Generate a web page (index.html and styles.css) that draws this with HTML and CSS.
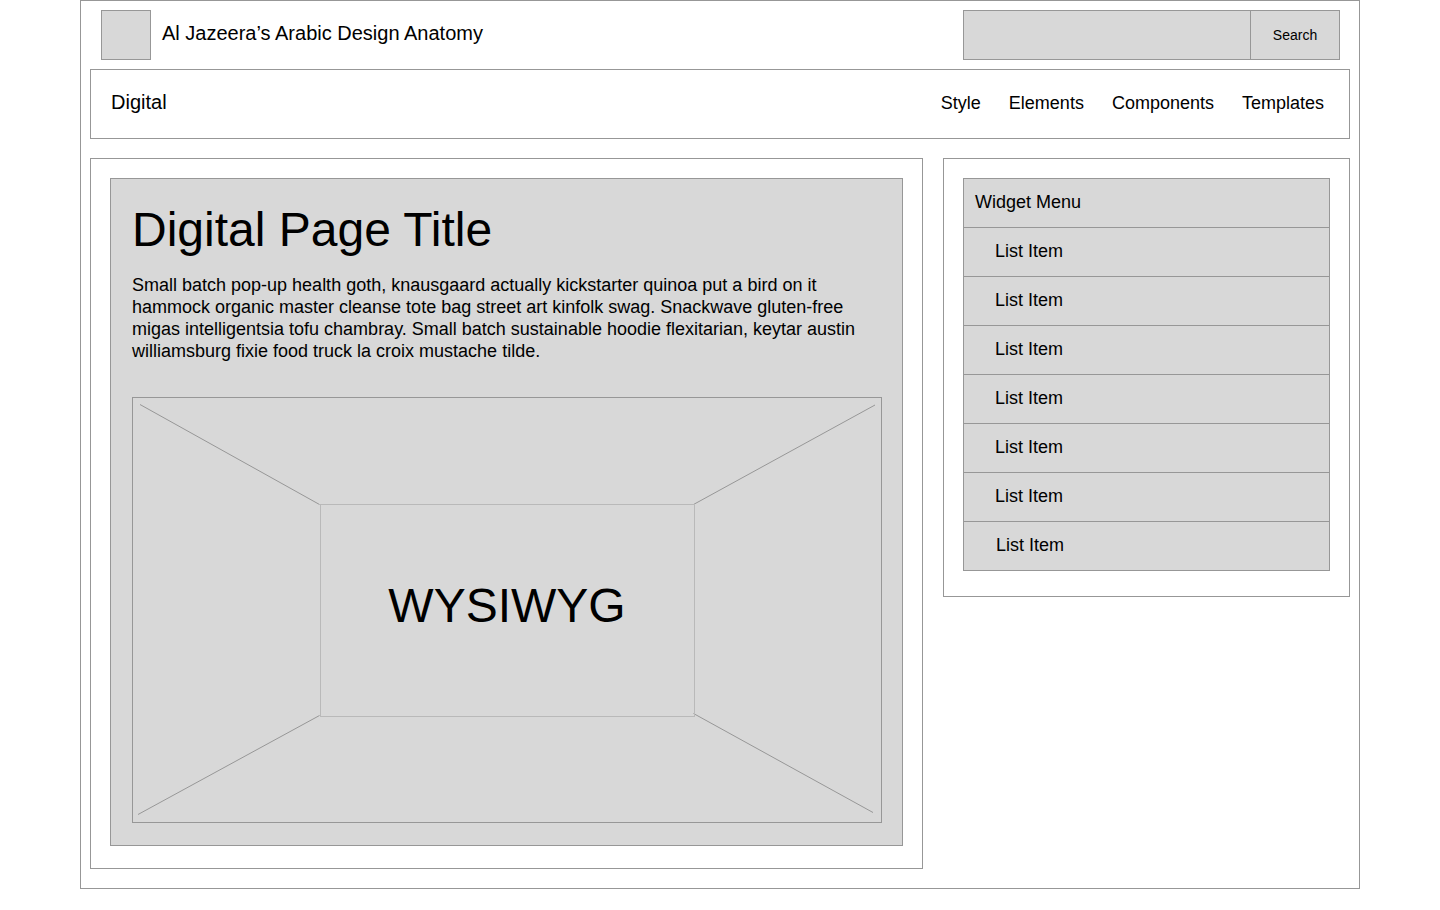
FILE: index.html
```html
<!DOCTYPE html>
<html lang="en">
<head>
<meta charset="utf-8">
<title>Al Jazeera’s Arabic Design Anatomy</title>
<link rel="stylesheet" href="styles.css">
</head>
<body>
<div class="page">
  <header class="masthead">
    <div class="brand">
      <div class="logo"></div>
      <span class="site-title">Al Jazeera’s Arabic Design Anatomy</span>
    </div>
    <form class="search">
      <div class="search-input"></div>
      <button type="button" class="search-btn">Search</button>
    </form>
  </header>
  <nav class="nav">
    <span class="nav-brand">Digital</span>
    <ul class="nav-links">
      <li>Style</li>
      <li>Elements</li>
      <li>Components</li>
      <li>Templates</li>
    </ul>
  </nav>
  <main class="main">
    <section class="content-col">
      <article class="content-card">
        <h1 class="page-title">Digital Page Title</h1>
        <p class="lede">Small batch pop-up health goth, knausgaard actually kickstarter quinoa put a bird on it hammock organic master cleanse tote bag street art kinfolk swag. Snackwave gluten-free migas intelligentsia tofu chambray. Small batch sustainable hoodie flexitarian, keytar austin williamsburg fixie food truck la croix mustache tilde.</p>
        <div class="placeholder">
          <svg class="placeholder-lines" width="750" height="426" viewBox="0 0 750 426" aria-hidden="true">
            <line x1="8" y1="7.5" x2="187.5" y2="107.5"/>
            <line x1="743" y1="8" x2="561.5" y2="107.5"/>
            <line x1="6" y1="417.5" x2="187.5" y2="318.5"/>
            <line x1="741" y1="415.5" x2="561.5" y2="316.5"/>
          </svg>
          <div class="placeholder-inner">WYSIWYG</div>
        </div>
      </article>
    </section>
    <aside class="side-col">
      <ul class="widget">
        <li class="widget-head">Widget Menu</li>
        <li class="widget-item">List Item</li>
        <li class="widget-item">List Item</li>
        <li class="widget-item">List Item</li>
        <li class="widget-item">List Item</li>
        <li class="widget-item">List Item</li>
        <li class="widget-item">List Item</li>
        <li class="widget-item widget-item--last">List Item</li>
      </ul>
    </aside>
  </main>
</div>
</body>
</html>
```

FILE: styles.css
```css
* {
  box-sizing: border-box;
}

html, body {
  margin: 0;
  padding: 0;
  background: #ffffff;
}

body {
  font-family: "Liberation Sans", Arial, Helvetica, sans-serif;
  color: #000000;
}

.page {
  width: 1280px;
  height: 889px;
  margin: 0 auto;
  border: 1px solid #979797;
  padding: 0 9px;
}

/* Header */
.masthead {
  height: 68px;
  display: flex;
  align-items: center;
  justify-content: space-between;
  padding: 0 10px 0 11px;
}

.brand {
  display: flex;
  align-items: center;
  gap: 11px;
}

.logo {
  width: 50px;
  height: 50px;
  background: #d8d8d8;
  border: 1px solid #979797;
}

.site-title {
  font-size: 20px;
  line-height: 24px;
  padding-bottom: 4px;
}

.search {
  display: flex;
  width: 377px;
  height: 50px;
  margin: 0;
  border: 1px solid #979797;
  background: #d8d8d8;
}

.search-input {
  flex: 1;
}

.search-btn {
  width: 89px;
  height: 100%;
  margin: 0;
  padding: 0;
  border: 0;
  border-left: 1px solid #979797;
  background: #d8d8d8;
  font-family: "Liberation Sans", Arial, Helvetica, sans-serif;
  font-size: 14px;
  color: #000000;
}

/* Nav */
.nav {
  height: 70px;
  border: 1px solid #979797;
  display: flex;
  align-items: center;
  justify-content: space-between;
  padding: 0 25px 0 20px;
}

.nav-brand {
  font-size: 20px;
  line-height: 24px;
  padding-bottom: 4px;
}

.nav-links {
  list-style: none;
  margin: 0;
  padding: 0 0 2px;
  display: flex;
  gap: 28px;
  font-size: 18px;
  line-height: 22px;
}

/* Main */
.main {
  display: flex;
  align-items: flex-start;
  gap: 20px;
  margin-top: 19px;
}

.content-col {
  width: 833px;
  height: 711px;
  border: 1px solid #979797;
  padding: 19px;
}

.content-card {
  height: 668px;
  background: #d8d8d8;
  border: 1px solid #979797;
  padding: 23px 20px 0 21px;
}

.page-title {
  margin: 0 0 16px;
  font-size: 48px;
  line-height: 56px;
  font-weight: normal;
}

.lede {
  margin: 0 0 35px;
  font-size: 18px;
  line-height: 22px;
}

.placeholder {
  position: relative;
  width: 750px;
  height: 426px;
  border: 1px solid #979797;
  display: flex;
  align-items: center;
  justify-content: center;
}

.placeholder-lines {
  position: absolute;
  left: -1px;
  top: -1px;
}

.placeholder-lines line {
  stroke: #979797;
  stroke-width: 1;
}

.placeholder-inner {
  position: relative;
  width: 375px;
  height: 213px;
  border: 1px solid #b9b9b9;
  display: flex;
  align-items: center;
  justify-content: center;
  padding-bottom: 9px;
  font-size: 48px;
  line-height: 56px;
}

/* Sidebar */
.side-col {
  width: 407px;
  height: 439px;
  border: 1px solid #979797;
  padding: 19px;
}

.widget {
  list-style: none;
  margin: 0;
  padding: 0;
  border: 1px solid #979797;
  background: #d8d8d8;
}

.widget-head,
.widget-item {
  height: 49px;
  display: flex;
  align-items: center;
  font-size: 18px;
  line-height: 22px;
  border-top: 1px solid #979797;
  padding-bottom: 2px;
}

.widget-head {
  height: 48px;
  border-top: 0;
  padding-left: 11px;
}

.widget-item {
  padding-left: 31px;
}

.widget-item--last {
  padding-left: 32px;
}
```
